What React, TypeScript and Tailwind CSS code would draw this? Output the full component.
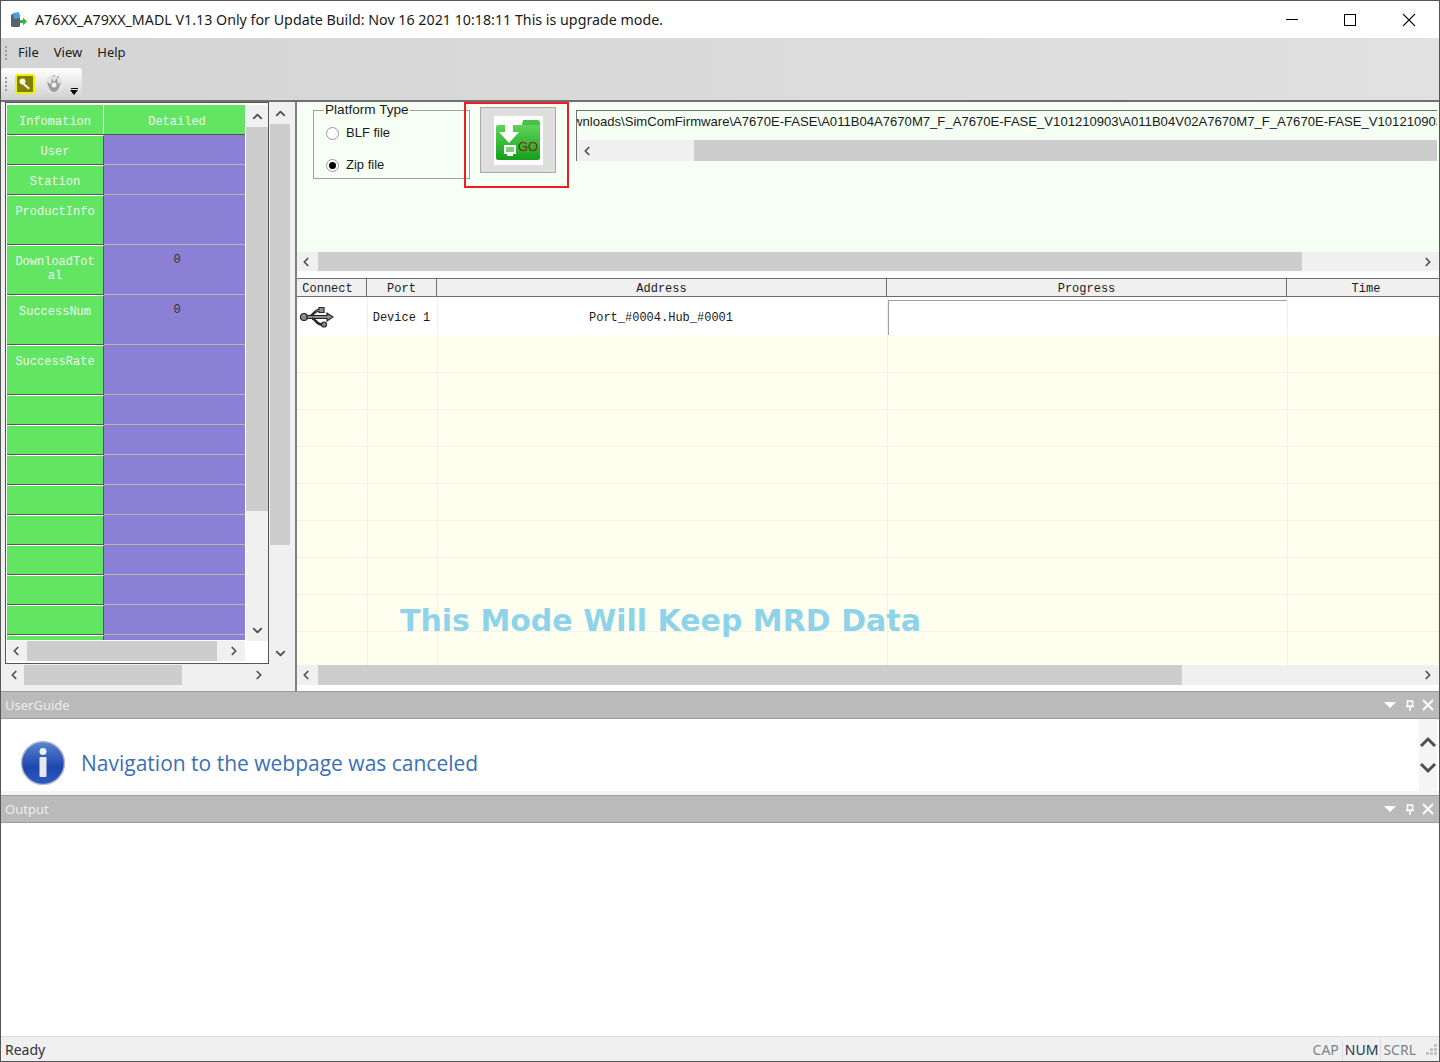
import React from 'react';
import { ChevronDown, ChevronLeft, ChevronRight, ChevronUp } from 'lucide-react';

const leftRows = [
  { label: 'User', value: '', h: 'h-[30px]' },
  { label: 'Station', value: '', h: 'h-[30px]' },
  { label: 'ProductInfo', value: '', h: 'h-[50px]' },
  { label: 'DownloadTot\nal', value: '0', h: 'h-[50px]' },
  { label: 'SuccessNum', value: '0', h: 'h-[50px]' },
  { label: 'SuccessRate', value: '', h: 'h-[50px]' },
  { label: '', value: '', h: 'h-[30px]' },
  { label: '', value: '', h: 'h-[30px]' },
  { label: '', value: '', h: 'h-[30px]' },
  { label: '', value: '', h: 'h-[30px]' },
  { label: '', value: '', h: 'h-[30px]' },
  { label: '', value: '', h: 'h-[30px]' },
  { label: '', value: '', h: 'h-[30px]' },
  { label: '', value: '', h: 'h-[30px]' },
  { label: '', value: '', h: 'h-[30px]' },
];

const columns = [
  { title: 'Connect', w: 'w-[70px] pr-[8px]' },
  { title: 'Port', w: 'w-[70px]' },
  { title: 'Address', w: 'w-[450px]' },
  { title: 'Progress', w: 'w-[400px]' },
  { title: 'Time', w: 'flex-1 pl-[6px]' },
];

const HBar = ({ thumb, className }: { thumb: string; className: string }) => (
  <div className={`flex bg-[#f0f0f0] text-[#505050] ${className}`}>
    <div className="flex w-[21px] shrink-0 items-center justify-center pr-[4px]">
      <ChevronLeft size={14} strokeWidth={3} />
    </div>
    <div className="min-w-0 flex-1">
      <div className={`h-full bg-[#cdcdcd] ${thumb}`} />
    </div>
    <div className="flex w-[21px] shrink-0 items-center justify-center pr-[2px]">
      <ChevronRight size={14} strokeWidth={3} />
    </div>
  </div>
);

const VBar = ({ thumb, className }: { thumb: string; className: string }) => (
  <div className={`flex flex-col bg-[#f0f0f0] text-[#505050] ${className}`}>
    <div className="flex h-[22px] shrink-0 items-center justify-center">
      <ChevronUp size={15} strokeWidth={3} />
    </div>
    <div className="min-h-0 flex-1">
      <div className={`w-full bg-[#cdcdcd] ${thumb}`} />
    </div>
    <div className="flex h-[22px] shrink-0 items-center justify-center">
      <ChevronDown size={15} strokeWidth={3} />
    </div>
  </div>
);

const Gripper = () => (
  <div className="flex w-[3px] flex-col gap-[2px]">
    <span className="h-[2px] w-[2px] bg-[#9a9a9a]" />
    <span className="h-[2px] w-[2px] bg-[#9a9a9a]" />
    <span className="h-[2px] w-[2px] bg-[#9a9a9a]" />
    <span className="h-[2px] w-[2px] bg-[#9a9a9a]" />
  </div>
);

const AppIcon = () => (
  <svg width="18" height="18" viewBox="0 0 18 18">
    <rect x="1" y="3" width="9" height="13" rx="1.5" fill="#59626b" />
    <path d="M3 2l6-1 1 6-6 1z" fill="#4d9de0" />
    <path d="M10 9h3V6.500l4 4-4 4V12h-3z" fill="#3fae3a" />
  </svg>
);

const KeyIcon = () => (
  <svg width="20" height="20" viewBox="0 0 20 20">
    <rect x="1" y="1" width="18" height="18" rx="2" fill="#7f7f00" stroke="#f0f000" strokeWidth="2" />
    <circle cx="7.500" cy="7.500" r="3" fill="#f4f4e8" />
    <path d="M9 9l6 5-1.500 1.500-6-5z" fill="#f4f4e8" />
  </svg>
);

const GearIcon = () => (
  <svg width="22" height="22" viewBox="0 0 22 22">
    <circle cx="11" cy="11" r="9" fill="#e4e4e4" />
    <path d="M4 9c2 6 3 10 7 10s5-4 7-10l-3 2-1-6-3 4-2-4-1 6z" fill="#9c9c9c" />
    <circle cx="11" cy="12" r="2.500" fill="#efefef" />
    <circle cx="11" cy="3" r="1" fill="#aaa" />
    <circle cx="15" cy="4" r="1" fill="#aaa" />
  </svg>
);

const GoIcon = () => (
  <div className="flex h-[49px] w-[49px] items-center justify-center bg-white">
    <svg width="46" height="42" viewBox="0 0 46 42">
      <defs>
        <linearGradient id="folder" x1="0" y1="0" x2="0" y2="1">
          <stop offset="0" stopColor="#5fd45a" />
          <stop offset="1" stopColor="#14a01c" />
        </linearGradient>
      </defs>
      <path d="M28 1h14a3 3 0 0 1 3 3v6H26z" fill="#45c246" />
      <path d="M1 8a2 2 0 0 1 2-2h39a3 3 0 0 1 3 3v30a2 2 0 0 1-2 2H3a2 2 0 0 1-2-2z" fill="url(#folder)" />
      <path d="M10 4h8v9h6L14 24 4 13h6z" fill="#fff" />
      <rect x="9" y="26" width="12" height="9" fill="#fff" />
      <rect x="11" y="28" width="8" height="5" fill="#7fce7b" />
      <rect x="12" y="35" width="6" height="2" fill="#fff" />
      <text x="23" y="32" fontFamily="Liberation Sans, sans-serif" fontSize="13" fill="#8a2020">GO</text>
    </svg>
  </div>
);

const UsbIcon = () => (
  <svg width="36" height="22" viewBox="0 0 36 22" fill="#8c8c8c" stroke="#262626" strokeWidth="1.200">
    <circle cx="5" cy="11" r="3.500" />
    <path d="M8 9.500h20V7l6 4-6 4v-2.500H8z" />
    <path d="M11 9.500c3-1 5-6 8-6h1V1.500h5v5h-5v-1h-1c-2 0-4 3-6 4z" />
    <path d="M13 12.500c3 0 5 6 9 6h1" fill="none" strokeWidth="2.400" />
    <circle cx="25" cy="18.500" r="2.500" />
  </svg>
);

const InfoIcon = () => (
  <svg width="46" height="46" viewBox="0 0 46 46">
    <defs>
      <linearGradient id="info" x1="0" y1="0" x2="0" y2="1">
        <stop offset="0" stopColor="#5b86d0" />
        <stop offset="0.6" stopColor="#1d46ae" />
        <stop offset="1" stopColor="#2f5cc0" />
      </linearGradient>
    </defs>
    <circle cx="23" cy="23" r="21.500" fill="url(#info)" stroke="#b4bcc8" strokeWidth="1.500" />
    <circle cx="23" cy="11.500" r="3.500" fill="#f2f2f2" />
    <rect x="19.500" y="17" width="7" height="20" rx="1" fill="#e8e8ee" />
  </svg>
);

const Radio = ({ checked, label }: { checked?: boolean; label: string }) => (
  <div className="flex h-[14px] items-center gap-[7px]">
    <span className="flex h-[13px] w-[13px] items-center justify-center rounded-full border border-[#9a9a9a] bg-white">
      {checked && <span className="h-[7px] w-[7px] rounded-full bg-black" />}
    </span>
    <span>{label}</span>
  </div>
);

const DockHeader = ({ title }: { title: string }) => (
  <div className="flex h-[28px] items-center justify-between border-y border-[#9c9c9c] bg-[#bababa] pl-[4px] pr-[5px] text-[13px] text-[#ececec]">
    <span className="pt-[2px]">{title}</span>
    <div className="flex items-center">
      <span className="h-0 w-0 border-x-[6px] border-t-[6px] border-x-transparent border-t-white" />
      <svg className="ml-[9px]" width="10" height="11" viewBox="0 0 10 11" fill="none" stroke="#fff" strokeWidth="1.500">
        <path d="M2.500 1h5v5h-5zM1 6.500h8M5 7v4" />
      </svg>
      <svg className="ml-[7px]" width="12" height="12" viewBox="0 0 12 12" fill="none" stroke="#fff" strokeWidth="1.800">
        <path d="M1 1l10 10M11 1L1 11" />
      </svg>
    </div>
  </div>
);

const App = () => {
  return (
    <div className="relative flex h-[1062px] w-[1440px] flex-col overflow-hidden border border-[#555] bg-white font-['Noto_Sans',sans-serif] text-[#1a1a1a]">
      {/* title bar */}
      <div className="flex h-[37px] shrink-0 items-center bg-white pl-[9px] pr-[1px]">
        <AppIcon />
        <span className="ml-[7px] text-[14.250px]">
          A76XX_A79XX_MADL V1.13 Only for Update Build: Nov 16 2021 10:18:11 This is upgrade mode.
        </span>
        <div className="ml-auto flex items-center">
          <div className="flex w-[58px] justify-center"><span className="h-px w-[12px] bg-black" /></div>
          <div className="flex w-[58px] justify-center"><span className="h-[12px] w-[12px] border border-black" /></div>
          <div className="flex w-[59px] justify-center">
            <svg width="14" height="14" viewBox="0 0 14 14" fill="none" stroke="#111" strokeWidth="1.100">
              <path d="M1 1l12 12M13 1L1 13" />
            </svg>
          </div>
        </div>
      </div>

      {/* menu and toolbar */}
      <div className="flex h-[62px] shrink-0 flex-col bg-gradient-to-r from-[#d4d4d4] to-[#e1e1e1]">
        <div className="flex h-[30px] items-center pl-[4px] text-[13px]">
          <Gripper />
          <span className="ml-[10px]">File</span>
          <span className="ml-[15px]">View</span>
          <span className="ml-[15px]">Help</span>
        </div>
        <div className="flex h-[32px] w-[81px] items-center rounded-[3px] bg-gradient-to-b from-white to-[#cfcfcf] pl-[4px]">
          <Gripper />
          <div className="ml-[7px]"><KeyIcon /></div>
          <div className="ml-[8px]"><GearIcon /></div>
          <div className="ml-[5px] mt-[14px] flex flex-col items-center gap-[1px]">
            <span className="h-px w-[7px] bg-black" />
            <span className="h-0 w-0 border-x-[4px] border-t-[5px] border-x-transparent border-t-black" />
          </div>
        </div>
      </div>

      {/* main area */}
      <div className="flex h-[591px] shrink-0 border-t-2 border-[#707070] bg-[#f0f0f0]">
        {/* left pane */}
        <div className="flex w-[296px] shrink-0 flex-col border-r-2 border-[#808080] pl-[4px]">
          <div className="flex h-[562px] shrink-0">
            <div className="flex h-full w-[264px] shrink-0 flex-col border border-[#555] bg-white pb-[2px] pl-[1px] pt-[2px]">
              <div className="flex min-h-0 flex-1">
                <div className="h-[535px] w-[238px] shrink-0 overflow-hidden font-['Liberation_Mono',monospace] text-[12px] leading-[14px] text-[#f0f5f0]">
                  <div className="flex h-[30px] border-b border-[#555]">
                    <div className="flex w-[97px] items-center justify-center border-r border-white bg-[#62e562] pt-[4px]">Infomation</div>
                    <div className="flex flex-1 items-center justify-center bg-[#62e562] pl-[5px] pt-[4px]">Detailed</div>
                  </div>
                  {leftRows.map((row, i) => (
                    <div key={i} className={`flex ${row.h}`}>
                      <div className="w-[97px] whitespace-pre-line border-b border-r border-t border-[#555] border-t-white bg-[#62e562] pt-[9px] text-center">
                        {row.label}
                      </div>
                      <div className="flex-1 border-b border-[#b8b8a8] bg-[#8b80d6] pl-[5px] pt-[8px] text-center text-[#333]">
                        {row.value}
                      </div>
                    </div>
                  ))}
                </div>
                <VBar thumb="h-[384px]" className="ml-[1px] w-[22px] shrink-0" />
              </div>
              <HBar thumb="w-[190px] -ml-[1px]" className="h-[20px] w-[238px] shrink-0" />
            </div>
            <VBar thumb="h-[421px]" className="ml-[1px] w-[20px] shrink-0" />
          </div>
          <HBar thumb="w-[158px] -ml-[2px]" className="mt-[1px] h-[20px] w-[265px] shrink-0" />
        </div>

        {/* right pane */}
        <div className="flex min-w-0 flex-1 flex-col">
          <div className="relative flex h-[170px] shrink-0 flex-col justify-between bg-[#f5fff3]">
            <div className="flex items-start pl-[16px] font-['Liberation_Sans',sans-serif] text-[13px]">
              <fieldset className="h-[77px] w-[157px] border border-[#a0a0a0] pl-[12px]">
                <legend className="-ml-[2px] px-[1px] text-[13.600px] leading-[16px]">Platform Type</legend>
                <div className="mt-[8px] flex flex-col gap-[18px]">
                  <Radio label="BLF file" />
                  <Radio checked label="Zip file" />
                </div>
              </fieldset>
              <div className="ml-[10px] mt-[5px] flex h-[66px] w-[76px] items-center justify-center border border-[#a8a8a8] bg-[#dedede]">
                <GoIcon />
              </div>
              <div className="ml-[20px] mr-[2px] mt-[8px] flex h-[51px] min-w-0 flex-1 flex-col justify-between overflow-hidden border-l border-t border-[#707070]">
                <div className="overflow-hidden whitespace-nowrap pt-[3px] text-[13.100px] leading-[16px]">
                  <span className="-ml-[4px] inline-block">wnloads\SimComFirmware\A7670E-FASE\A011B04A7670M7_F_A7670E-FASE_V101210903\A011B04V02A7670M7_F_A7670E-FASE_V101210903</span>
                </div>
                <div className="flex h-[21px] shrink-0 text-[#505050]">
                  <div className="flex w-[117px] items-center bg-[#f0f0f0] pl-[3px]"><ChevronLeft size={14} strokeWidth={3} /></div>
                  <div className="flex-1 bg-[#cdcdcd]" />
                </div>
              </div>
            </div>
            <HBar thumb="w-[984px]" className="mb-[1px] h-[19px] shrink-0" />
            {/* red highlight drawn over the screenshot */}
            <div className="absolute left-[167px] top-[0px] h-[86px] w-[105px] border-2 border-[#ee1c25]" />
          </div>

          {/* device table */}
          <div className="relative flex min-h-0 flex-1 flex-col bg-white pt-[6px]">
            <div className="flex h-[19px] shrink-0 border-y border-[#6e6e6e] bg-[#f0f0f0] font-['Liberation_Mono',monospace] text-[12px] leading-[21px]">
              {columns.map((c) => (
                <div key={c.title} className={`${c.w} border-r border-[#707070] text-center last:border-r-0`}>{c.title}</div>
              ))}
            </div>
            <div className="flex h-[38px] shrink-0 font-['Liberation_Mono',monospace] text-[12px]">
              <div className="flex w-[71px] items-center border-r border-[#eeeeee] pl-[2px] pt-[2px]"><UsbIcon /></div>
              <div className="flex w-[70px] items-center justify-center border-r border-[#eeeeee] pr-[2px] pt-[4px]">Device 1</div>
              <div className="flex w-[450px] items-center justify-center border-r border-[#eeeeee] pr-[3px] pt-[4px]">Port_#0004.Hub_#0001</div>
              <div className="w-[399px] pt-[3px]">
                <div className="h-[35px] border-l border-t border-[#a0a0a0]" />
              </div>
              <div className="flex-1 border-l border-[#eeeeee]" />
            </div>
            <div className="grid min-h-0 flex-1 grid-cols-[71px_70px_450px_400px_1fr] overflow-hidden bg-[#feffef] pt-px">
              {Array.from({ length: 45 }).map((_, i) => (
                <div key={i} className="h-[37px] border-b border-r border-[#f2f2e6]" />
              ))}
            </div>
            <HBar thumb="w-[864px]" className="mb-[6px] h-[20px] shrink-0" />
            <div className="absolute left-[103px] top-[331px] whitespace-nowrap font-['DejaVu_Sans',sans-serif] text-[30px] font-bold leading-[36px] text-[#8ed3ea]">
              This Mode Will Keep MRD Data
            </div>
          </div>
        </div>
      </div>

      {/* user guide dock */}
      <DockHeader title="UserGuide" />
      <div className="flex h-[76px] shrink-0 bg-[#f4f4f4] pb-[4px]">
        <div className="flex flex-1 items-center bg-white pl-[19px] pt-[16px]">
          <InfoIcon />
          <span className="ml-[15px] mt-[2px] font-['Open_Sans',sans-serif] text-[21px] text-[#3a70b8]">Navigation to the webpage was canceled</span>
        </div>
        <div className="flex w-[18px] flex-col items-center gap-[14px] bg-[#f5f5f5] pt-[17px]">
          <svg width="18" height="12" viewBox="0 0 18 12" fill="none" stroke="#505050" strokeWidth="3"><path d="M2 10l7-7 7 7" /></svg>
          <svg width="18" height="12" viewBox="0 0 18 12" fill="none" stroke="#505050" strokeWidth="3"><path d="M2 2l7 7 7-7" /></svg>
        </div>
        <div className="w-[2px] bg-white" />
      </div>

      {/* output dock */}
      <DockHeader title="Output" />
      <div className="min-h-0 flex-1 bg-white" />

      {/* status bar */}
      <div className="flex h-[25px] shrink-0 items-center justify-between border-t border-[#dcdcdc] bg-[#f0f0f0] pl-[4px] text-[14px] text-[#333]">
        <span>Ready</span>
        <div className="flex h-full items-center">
          <span className="border-r border-[#dcdcdc] pr-[3px] text-[#7a8288]">CAP</span>
          <span className="border-r border-[#dcdcdc] px-[2px] text-[#23364f]">NUM</span>
          <span className="pl-[2px] pr-[3px] text-[#7a8288]">SCRL</span>
          <svg width="20" height="20" viewBox="0 0 20 20" fill="#c4c4c4">
            <rect x="15" y="5" width="3" height="3" />
            <rect x="11" y="9" width="3" height="3" />
            <rect x="15" y="9" width="3" height="3" />
            <rect x="7" y="13" width="3" height="3" />
            <rect x="11" y="13" width="3" height="3" />
            <rect x="15" y="13" width="3" height="3" />
          </svg>
        </div>
      </div>
    </div>
  );
};

export default App;
